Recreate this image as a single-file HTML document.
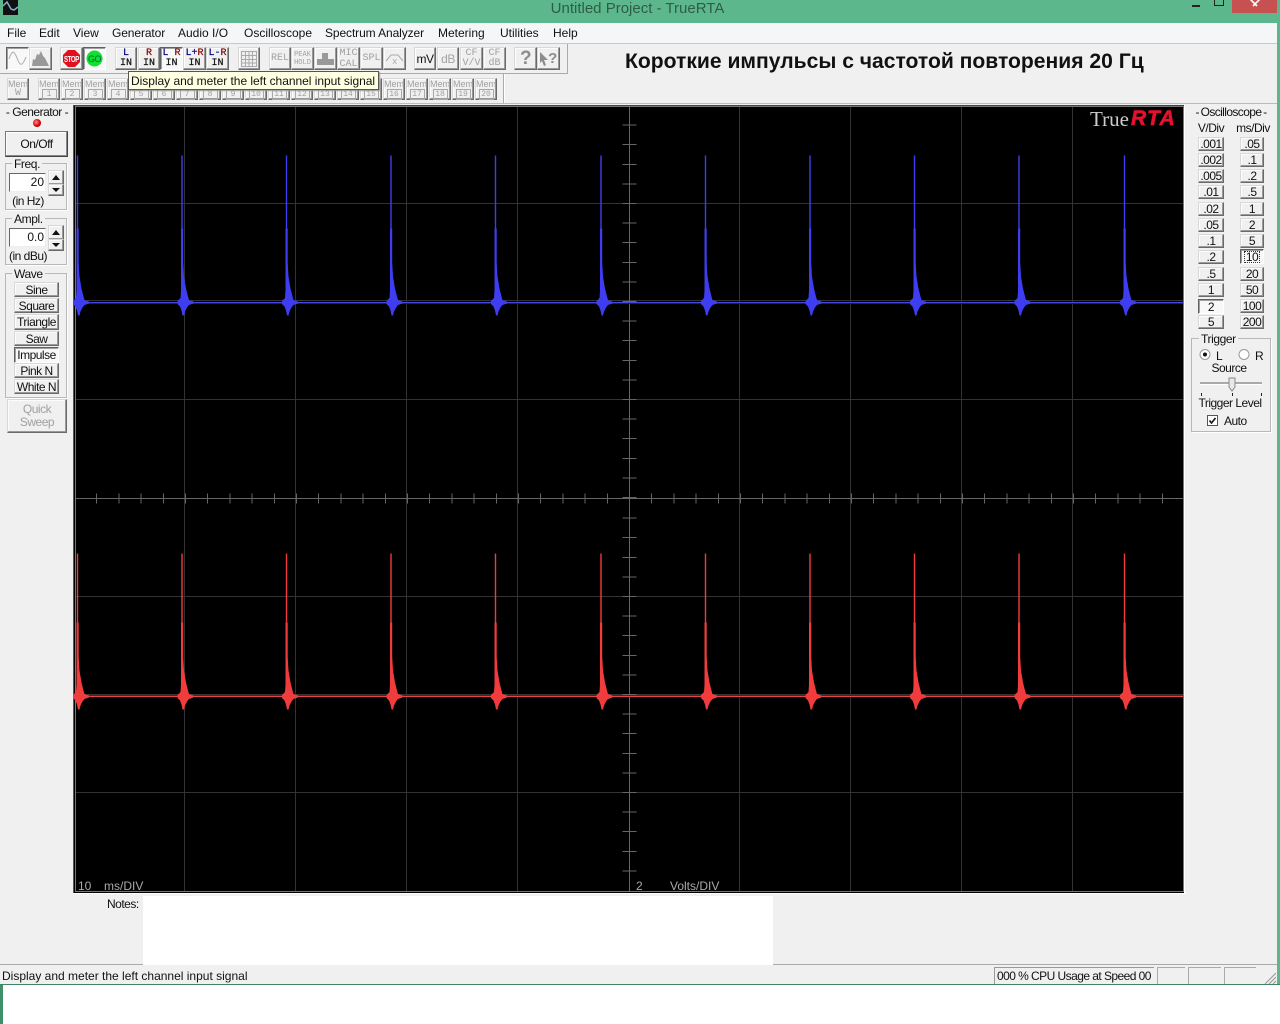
<!DOCTYPE html>
<html><head><meta charset="utf-8"><title>Untitled Project - TrueRTA</title>
<style>
html,body{margin:0;padding:0;width:1280px;height:1024px;overflow:hidden;background:#fff;font:12px "Liberation Sans","Noto Sans CJK SC",sans-serif;color:#111}
#a{position:absolute;left:0;top:0;width:1280px;height:1024px;overflow:hidden}
#a div,#a span.t{position:absolute}
.t{position:absolute;white-space:nowrap;line-height:14px}
.l{letter-spacing:-.5px}
.c{transform:translateX(-50%)}
.b{box-sizing:border-box;background:#f0f0f0;border:1px solid;border-color:#d8d8d8 #6a6a6a #6a6a6a #d8d8d8;box-shadow:inset -1px -1px #9a9a9a,inset 1px 1px #fcfcfc;display:flex;align-items:center;justify-content:center;white-space:nowrap;line-height:12px;text-align:center;letter-spacing:-.5px}
.p{border-color:#606060 #fff #fff #606060;box-shadow:inset 1px 1px #a0a0a0;background:#f8f8f8}
.m{font:10px/10px "Liberation Mono",monospace;flex-direction:column;letter-spacing:0;-webkit-text-stroke:.2px}
.g{color:#a0a0a0;font:10px/10px "Liberation Mono",monospace;flex-direction:column;letter-spacing:0}
.e{font:9px/10px "Liberation Sans",sans-serif;letter-spacing:0}
.n{display:inline-block;border:1px solid #a8a8a8;width:13px;height:9px;line-height:9px;font-size:8px;letter-spacing:0}
.gb{box-sizing:border-box;border:1px solid #b8b8b8;box-shadow:1px 1px #fff}
.lg{background:#f0f0f0;padding:0 2px;line-height:12px;letter-spacing:-.4px}
.in{box-sizing:border-box;background:#fff;border:1px solid;border-color:#666 #eee #eee #666;text-align:right;padding-right:1px;line-height:17px}
.u{color:#000080}.r{color:#800000}
</style></head><body><div id="a">
<!-- window -->
<div style="left:0;top:0;width:1280px;height:23px;background:#5cb88c"></div>
<div style="left:1277px;top:0;width:3px;height:985px;background:#5cb88c"></div>
<div style="left:0;top:23px;width:1277px;height:961px;background:#f0f0f0"></div>
<div style="left:0;top:984px;width:1280px;height:1px;background:#3f8463"></div>
<div style="left:0;top:985px;width:3px;height:39px;background:#3f8f6a"></div>
<div style="left:3px;top:0;width:15px;height:15px;background:#111"></div>
<svg style="position:absolute;left:3px;top:0" width="15" height="15"><path d="M0 6 L4 2 L8 9 L11 10 L15 7" stroke="#7fb0d0" stroke-width="1.5" fill="none"/></svg>
<span class="t c" style="left:637.500px;top:2px;font-size:15px;color:#2f5c48">Untitled Project - TrueRTA</span>
<div style="left:1192px;top:5px;width:8px;height:2px;background:#222"></div>
<div style="left:1214px;top:0;width:8px;height:5px;border:1px solid #222;border-top-width:0;box-sizing:content-box"></div>
<div style="left:1232px;top:0;width:45px;height:13px;background:#c75050"></div>
<svg style="position:absolute;left:1249px;top:0" width="12" height="8"><path d="M1 -1L6 4L11 -1M6 4L4 6M6 4L8 6" stroke="#fff" stroke-width="1.6" fill="none"/></svg>
<!-- menu -->
<div style="left:0;top:23px;width:1277px;height:20px;background:#f5f6f7"></div>
<div style="left:0;top:43px;width:1277px;height:1px;background:#c8c8c8"></div>
<span class="t" style="left:7px;top:26px">File</span><span class="t" style="left:39px;top:26px">Edit</span><span class="t" style="left:73px;top:26px">View</span><span class="t" style="left:112px;top:26px;letter-spacing:-.1px">Generator</span><span class="t" style="left:178px;top:26px">Audio I/O</span><span class="t" style="left:244px;top:26px">Oscilloscope</span><span class="t" style="left:325px;top:26px;letter-spacing:-.1px">Spectrum Analyzer</span><span class="t" style="left:438px;top:26px">Metering</span><span class="t" style="left:500px;top:26px">Utilities</span><span class="t" style="left:553px;top:26px">Help</span>
<!-- toolbar separators -->
<div style="left:0;top:73px;width:567px;height:1px;background:#aaa"></div>
<div style="left:567px;top:44px;width:1px;height:30px;background:#aaa"></div>
<div style="left:503px;top:74px;width:1px;height:29px;background:#aaa"></div>
<div style="left:504px;top:74px;width:1px;height:29px;background:#fff"></div>
<div style="left:0;top:103px;width:1277px;height:1px;background:#bbb"></div>
<!-- toolbar row 1 -->
<div class="b p" style="left:6px;top:47px;width:23px;height:23px"><svg width="21" height="21"><path d="M2 11C5 2 7 2 10 10S15 19 19 9" stroke="#aaa" fill="none"/></svg></div>
<div class="b" style="left:29px;top:47px;width:23px;height:23px"><svg width="21" height="21"><path d="M2 18L3 11L5 12L7 6L9 7L11 3L13 8L15 10L17 14L19 18Z" fill="#999"/></svg></div>
<div class="b" style="left:60px;top:47px;width:23px;height:23px"><svg width="21" height="21"><path d="M7 2H14L19 7V14L14 19H7L2 14V7Z" fill="#e01020"/><text x="10.5" y="14" font-family="Liberation Sans" font-size="8" font-weight="bold" fill="#fff" text-anchor="middle" textLength="15" lengthAdjust="spacingAndGlyphs">STOP</text></svg></div>
<div class="b p" style="left:83px;top:47px;width:23px;height:23px"><svg width="21" height="21"><circle cx="10.5" cy="10.5" r="8" fill="#10e030"/><text x="10.5" y="14" font-family="Liberation Sans" font-size="9" fill="#064" text-anchor="middle">GO</text></svg></div>
<div class="b m" style="left:115px;top:47px;width:22px;height:23px"><span class="u">L</span><span>IN</span></div>
<div class="b m" style="left:138px;top:47px;width:22px;height:23px"><span class="r">R</span><span>IN</span></div>
<div class="b m p" style="left:160px;top:47px;width:23px;height:23px"><span><span class="u">L</span> <span class="r">R</span></span><span>IN</span></div>
<div class="b m" style="left:183px;top:47px;width:23px;height:23px"><span><span class="u">L+</span><span class="r">R</span></span><span>IN</span></div>
<div class="b m" style="left:206px;top:47px;width:23px;height:23px"><span><span class="u">L-</span><span class="r">R</span></span><span>IN</span></div>
<div class="b" style="left:238px;top:47px;width:22px;height:23px"><svg width="16" height="17"><path d="M.5 1V16M4.5 1V16M8 1V16M11.5 1V16M15.5 1V16M0 1.500H16M0 5.500H16M0 9.500H16M0 13H16M0 16.500H16" stroke="#aaa" fill="none"/></svg></div>
<div class="b g" style="left:269px;top:47px;width:22px;height:23px">REL</div>
<div class="b g" style="left:291px;top:47px;width:23px;height:23px;font-size:7px;line-height:8px"><span>PEAK</span><span>HOLD</span></div>
<div class="b" style="left:314px;top:47px;width:23px;height:23px"><svg width="19" height="17"><path d="M1 15V9H6V3H12V9H18V15Z" fill="#999"/></svg></div>
<div class="b g" style="left:337px;top:47px;width:23px;height:23px;line-height:11px"><span>MIC</span><span>CAL</span></div>
<div class="b g" style="left:360px;top:47px;width:23px;height:23px">SPL</div>
<div class="b" style="left:383px;top:47px;width:23px;height:23px"><svg width="19" height="17"><path d="M1 11L6 5H13L18 11" stroke="#aaa" fill="none"/><text x="9.500" y="14" font-family="Liberation Mono" font-size="9" fill="#aaa" text-anchor="middle">x</text></svg></div>
<div class="b" style="left:414px;top:47px;width:22px;height:23px;font-size:12px">mV</div>
<div class="b" style="left:437px;top:47px;width:22px;height:23px;color:#a4a4a4;font-size:12px">dB</div>
<div class="b g" style="left:460px;top:47px;width:23px;height:23px"><span>CF</span><span>V/V</span></div>
<div class="b g" style="left:483px;top:47px;width:23px;height:23px"><span>CF</span><span>dB</span></div>
<div class="b" style="left:514px;top:47px;width:23px;height:23px;font:bold 19px/18px 'Liberation Sans';color:#8c8c8c">?</div>
<div class="b" style="left:537px;top:47px;width:23px;height:23px;font:bold 15px/14px 'Liberation Sans';color:#8c8c8c"><svg width="8" height="16"><path d="M0 1L8 9H4L6 14L4 15L2 10L0 12Z" fill="#8c8c8c"/></svg>?</div>
<!-- heading -->
<span class="t" style="left:625px;top:50px;font:bold 21.1px/24px 'Liberation Sans',sans-serif;color:#111">Короткие импульсы с частотой повторения 20 Гц</span>
<!-- toolbar row 2 -->
<div class="b g" style="left:7px;top:78px;width:22px;height:22px"><span class="e">Mem</span><span>W</span></div>
<div class="b g" style="left:38px;top:78px;width:22px;height:22px"><span class="e">Mem</span><span class="n">1</span></div>
<div class="b g" style="left:61px;top:78px;width:22px;height:22px"><span class="e">Mem</span><span class="n">2</span></div>
<div class="b g" style="left:84px;top:78px;width:22px;height:22px"><span class="e">Mem</span><span class="n">3</span></div>
<div class="b g" style="left:107px;top:78px;width:22px;height:22px"><span class="e">Mem</span><span class="n">4</span></div>
<div class="b g" style="left:130px;top:78px;width:22px;height:22px"><span class="e">Mem</span><span class="n">5</span></div>
<div class="b g" style="left:153px;top:78px;width:22px;height:22px"><span class="e">Mem</span><span class="n">6</span></div>
<div class="b g" style="left:176px;top:78px;width:22px;height:22px"><span class="e">Mem</span><span class="n">7</span></div>
<div class="b g" style="left:199px;top:78px;width:22px;height:22px"><span class="e">Mem</span><span class="n">8</span></div>
<div class="b g" style="left:222px;top:78px;width:22px;height:22px"><span class="e">Mem</span><span class="n">9</span></div>
<div class="b g" style="left:245px;top:78px;width:22px;height:22px"><span class="e">Mem</span><span class="n">10</span></div>
<div class="b g" style="left:268px;top:78px;width:22px;height:22px"><span class="e">Mem</span><span class="n">11</span></div>
<div class="b g" style="left:291px;top:78px;width:22px;height:22px"><span class="e">Mem</span><span class="n">12</span></div>
<div class="b g" style="left:314px;top:78px;width:22px;height:22px"><span class="e">Mem</span><span class="n">13</span></div>
<div class="b g" style="left:337px;top:78px;width:22px;height:22px"><span class="e">Mem</span><span class="n">14</span></div>
<div class="b g" style="left:360px;top:78px;width:22px;height:22px"><span class="e">Mem</span><span class="n">15</span></div>
<div class="b g" style="left:383px;top:78px;width:22px;height:22px"><span class="e">Mem</span><span class="n">16</span></div>
<div class="b g" style="left:406px;top:78px;width:22px;height:22px"><span class="e">Mem</span><span class="n">17</span></div>
<div class="b g" style="left:429px;top:78px;width:22px;height:22px"><span class="e">Mem</span><span class="n">18</span></div>
<div class="b g" style="left:452px;top:78px;width:22px;height:22px"><span class="e">Mem</span><span class="n">19</span></div>
<div class="b g" style="left:475px;top:78px;width:22px;height:22px"><span class="e">Mem</span><span class="n">20</span></div>
<!-- tooltip -->
<div style="left:128px;top:71px;width:251px;height:19px;box-sizing:border-box;background:#ffffe1;border:1px solid #555;box-shadow:1px 1px 1px #999;line-height:18px;padding-left:2px;white-space:nowrap;letter-spacing:-.03px;z-index:5">Display and meter the left channel input signal</div>
<!-- plot -->
<div style="left:73px;top:105px;width:1111px;height:788px;box-sizing:border-box;background:#000;border-top:1px solid #444;border-left:1px solid #555"></div>
<div style="left:73px;top:893px;width:1113px;height:1px;background:#fff"></div>
<div style="left:1184px;top:105px;width:1px;height:789px;background:#fff"></div>
<svg style="position:absolute;left:0;top:0" width="1280" height="1024" shape-rendering="crispEdges">
<defs><path id="p" shape-rendering="auto" d="M-.7-147H.7V-74H1.200V-40L2-26L4-14L6-6L7-2.500L11.500-1V1L7 2.500L5 5L3 9L2 13H.5L-.5 8L-2 4L-4.500 1.500V-1.500L-1.500-4.500L-1-12V-74H-.7Z"/><clipPath id="cr"><rect x="0" y="-143" width="1280" height="200"/></clipPath></defs>
<rect x="75.500" y="106.500" width="1108" height="785" fill="none" stroke="#777"/>
<path d="M184.500 107V891M295.500 107V891M406.500 107V891M517.500 107V891M739.500 107V891M850.500 107V891M961.500 107V891M1072.500 107V891" stroke="#333"/>
<path d="M76 203.500H1183M76 300.500H1183M76 399.500H1183M76 596.500H1183M76 694.500H1183M76 792.500H1183" stroke="#333"/>
<path d="M76 498.500H1183M629.500 107V891" stroke="#666"/>
<path d="M629 498.500H1183" stroke="#666" stroke-width="10" stroke-dasharray="1 21.200" fill="none"/>
<path d="M630 498.500H76" stroke="#666" stroke-width="10" stroke-dasharray="1 21.200" fill="none"/>
<path d="M629.500 498V875" stroke="#666" stroke-width="14" stroke-dasharray="1 18.600" fill="none"/>
<path d="M629.500 498V118" stroke="#666" stroke-width="14" stroke-dasharray="1 18.600" fill="none"/>
<rect x="76" y="302" width="1107" height="1" fill="#4646e0"/>
<rect x="76" y="303" width="1107" height="1" fill="#1c1c66"/>
<rect x="76" y="696" width="1107" height="1" fill="#e84444"/>
<rect x="76" y="695" width="1107" height="1" fill="#5c1c1c"/>
<g fill="#3e3ef0" transform="translate(0,302.500)"><use href="#p" x="77.500"/><use href="#p" x="182"/><use href="#p" x="286.500"/><use href="#p" x="391"/><use href="#p" x="495.500"/><use href="#p" x="601"/><use href="#p" x="705.500"/><use href="#p" x="810"/><use href="#p" x="914.500"/><use href="#p" x="1019"/><use href="#p" x="1124.500"/></g>
<g fill="#f03c3c" transform="translate(0,696.500)" clip-path="url(#cr)"><use href="#p" x="77.500"/><use href="#p" x="182"/><use href="#p" x="286.500"/><use href="#p" x="391"/><use href="#p" x="495.500"/><use href="#p" x="601"/><use href="#p" x="705.500"/><use href="#p" x="810"/><use href="#p" x="914.500"/><use href="#p" x="1019"/><use href="#p" x="1124.500"/></g>
</svg>
<span class="t" style="left:1090px;top:108px;font:21px/22px 'Liberation Serif',serif;color:#ccc">True</span>
<span class="t" style="left:1131px;top:108px;font:italic bold 21px/22px 'Liberation Sans',sans-serif;letter-spacing:1.200px;-webkit-text-stroke:.6px #e8102c;color:#e8102c">RTA</span>
<span class="t" style="left:78px;top:879px;color:#aaa">10</span><span class="t" style="left:104px;top:879px;color:#aaa">ms/DIV</span><span class="t" style="left:636px;top:879px;color:#aaa">2</span><span class="t" style="left:670px;top:879px;color:#aaa">Volts/DIV</span>
<!-- left panel -->
<span class="t c l" style="left:37px;top:105px">- Generator -</span>
<div style="left:33px;top:119px;width:8px;height:8px;border-radius:50%;background:radial-gradient(circle at 40% 40%,#f88,#d00 55%,#700)"></div>
<div class="b" style="left:5px;top:131px;width:63px;height:26px;border-color:#777 #444 #444 #777;box-shadow:inset -1px -1px #888,inset 1px 1px #fff">On/Off</div>
<div class="gb" style="left:5px;top:163px;width:62px;height:47px"></div>
<span class="t lg" style="left:12px;top:158px">Freq.</span>
<div class="in" style="left:9px;top:173px;width:37px;height:19px">20</div>
<div class="b" style="left:48px;top:170px;width:16px;height:15px"><svg width="8" height="5"><path d="M4 0L8 5H0Z" fill="#111"/></svg></div>
<div class="b" style="left:48px;top:184px;width:16px;height:12px"><svg width="8" height="4"><path d="M0 0H8L4 4Z" fill="#111"/></svg></div>
<span class="t c l" style="left:28px;top:194px">(in Hz)</span>
<div class="gb" style="left:5px;top:218px;width:62px;height:47px"></div>
<span class="t lg" style="left:12px;top:213px">Ampl.</span>
<div class="in" style="left:9px;top:228px;width:37px;height:19px">0.0</div>
<div class="b" style="left:48px;top:225px;width:16px;height:15px"><svg width="8" height="5"><path d="M4 0L8 5H0Z" fill="#111"/></svg></div>
<div class="b" style="left:48px;top:239px;width:16px;height:12px"><svg width="8" height="4"><path d="M0 0H8L4 4Z" fill="#111"/></svg></div>
<span class="t c l" style="left:28px;top:249px">(in dBu)</span>
<div class="gb" style="left:5px;top:273px;width:62px;height:125px"></div>
<span class="t lg" style="left:12px;top:268px">Wave</span>
<div class="b" style="left:14px;top:282px;width:45px;height:15px">Sine</div>
<div class="b" style="left:14px;top:298px;width:45px;height:15px">Square</div>
<div class="b" style="left:14px;top:314px;width:45px;height:16px">Triangle</div>
<div class="b" style="left:14px;top:331px;width:45px;height:15px">Saw</div>
<div class="b p" style="left:14px;top:347px;width:45px;height:16px">Impulse</div>
<div class="b" style="left:14px;top:363px;width:45px;height:15px">Pink N</div>
<div class="b" style="left:14px;top:379px;width:45px;height:15px">White N</div>
<div class="b" style="left:7px;top:399px;width:60px;height:34px;color:#a0a0a0;flex-direction:column;line-height:13px"><span>Quick</span><span>Sweep</span></div>
<!-- right panel -->
<span class="t c l" style="left:1231px;top:105px;letter-spacing:-.6px;word-spacing:-1px">- Oscilloscope -</span>
<span class="t c l" style="left:1211px;top:121px">V/Div</span><span class="t c l" style="left:1253px;top:121px">ms/Div</span>
<div class="b" style="left:1198px;top:137px;width:26px;height:14px">.001</div>
<div class="b" style="left:1198px;top:153px;width:26px;height:14px">.002</div>
<div class="b" style="left:1198px;top:169px;width:26px;height:14px">.005</div>
<div class="b" style="left:1198px;top:185px;width:26px;height:14px">.01</div>
<div class="b" style="left:1198px;top:202px;width:26px;height:14px">.02</div>
<div class="b" style="left:1198px;top:218px;width:26px;height:14px">.05</div>
<div class="b" style="left:1198px;top:234px;width:26px;height:14px">.1</div>
<div class="b" style="left:1198px;top:250px;width:26px;height:14px">.2</div>
<div class="b" style="left:1198px;top:267px;width:26px;height:14px">.5</div>
<div class="b" style="left:1198px;top:283px;width:26px;height:14px">1</div>
<div class="b p" style="left:1198px;top:299px;width:26px;height:15px">2</div>
<div class="b" style="left:1198px;top:315px;width:26px;height:14px">5</div>
<div class="b" style="left:1240px;top:137px;width:24px;height:14px">.05</div>
<div class="b" style="left:1240px;top:153px;width:24px;height:14px">.1</div>
<div class="b" style="left:1240px;top:169px;width:24px;height:14px">.2</div>
<div class="b" style="left:1240px;top:185px;width:24px;height:14px">.5</div>
<div class="b" style="left:1240px;top:202px;width:24px;height:14px">1</div>
<div class="b" style="left:1240px;top:218px;width:24px;height:14px">2</div>
<div class="b" style="left:1240px;top:234px;width:24px;height:14px">5</div>
<div class="b p" style="left:1240px;top:249px;width:24px;height:15px"><span style="outline:1px dotted #333;padding:0 1px;line-height:10px">10</span></div>
<div class="b" style="left:1240px;top:267px;width:24px;height:14px">20</div>
<div class="b" style="left:1240px;top:283px;width:24px;height:14px">50</div>
<div class="b" style="left:1240px;top:299px;width:24px;height:14px">100</div>
<div class="b" style="left:1240px;top:315px;width:24px;height:14px">200</div>
<div class="gb" style="left:1191px;top:338px;width:80px;height:94px"></div>
<span class="t lg" style="left:1199px;top:333px">Trigger</span>
<svg style="position:absolute;left:1198px;top:348px" width="60" height="14"><circle cx="7" cy="6.500" r="5" fill="#fff" stroke="#999"/><circle cx="7" cy="6.500" r="2" fill="#111"/><circle cx="46" cy="6.500" r="5" fill="#fff" stroke="#999"/></svg>
<span class="t" style="left:1216px;top:349px">L</span><span class="t" style="left:1255px;top:349px">R</span>
<span class="t c l" style="left:1229px;top:361px">Source</span>
<svg style="position:absolute;left:1198px;top:376px" width="66" height="22" shape-rendering="crispEdges"><rect x="2" y="6" width="62" height="2" fill="#aaa"/><rect x="2" y="8" width="62" height="1" fill="#fff"/><path d="M31 2H37V11L34 15L31 11Z" fill="#e8e8e8" stroke="#888" shape-rendering="auto"/><path d="M3.500 17V20M34.500 17V20M63.500 17V20" stroke="#222"/></svg>
<span class="t c l" style="left:1230px;top:396px">Trigger Level</span>
<div style="left:1207px;top:415px;width:11px;height:11px;box-sizing:border-box;background:#fff;border:1px solid #555"></div>
<svg style="position:absolute;left:1207px;top:415px" width="11" height="11"><path d="M2.500 5.500L4.500 8L8.500 3" stroke="#111" stroke-width="1.600" fill="none"/></svg>
<span class="t l" style="left:1224px;top:414px">Auto</span>
<!-- notes -->
<span class="t l" style="left:107px;top:897px">Notes:</span>
<div style="left:143px;top:896px;width:630px;height:68px;background:#fff"></div>
<!-- status -->
<div style="left:0;top:964px;width:143px;height:1px;background:#aaa"></div>
<div style="left:773px;top:964px;width:504px;height:1px;background:#aaa"></div>
<div style="left:143px;top:964px;width:630px;height:1px;background:#fff"></div>
<span class="t" style="left:2px;top:969px">Display and meter the left channel input signal</span>
<div style="left:994px;top:967px;width:160px;height:17px;box-sizing:border-box;border-left:1px solid #999;border-top:1px solid #999;padding-left:2px;line-height:16px;white-space:nowrap;letter-spacing:-.55px">000 % CPU Usage at Speed 00</div>
<div style="left:1157px;top:967px;width:28px;height:17px;box-sizing:border-box;border-left:1px solid #aaa;border-top:1px solid #aaa"></div>
<div style="left:1188px;top:967px;width:33px;height:17px;box-sizing:border-box;border-left:1px solid #aaa;border-top:1px solid #aaa"></div>
<div style="left:1224px;top:967px;width:32px;height:17px;box-sizing:border-box;border-left:1px solid #aaa;border-top:1px solid #aaa"></div>
<svg style="position:absolute;left:1264px;top:972px" width="12" height="12"><path d="M1 12L12 1M5 12L12 5M9 12L12 9" stroke="#999" fill="none"/></svg>
</div></body></html>
